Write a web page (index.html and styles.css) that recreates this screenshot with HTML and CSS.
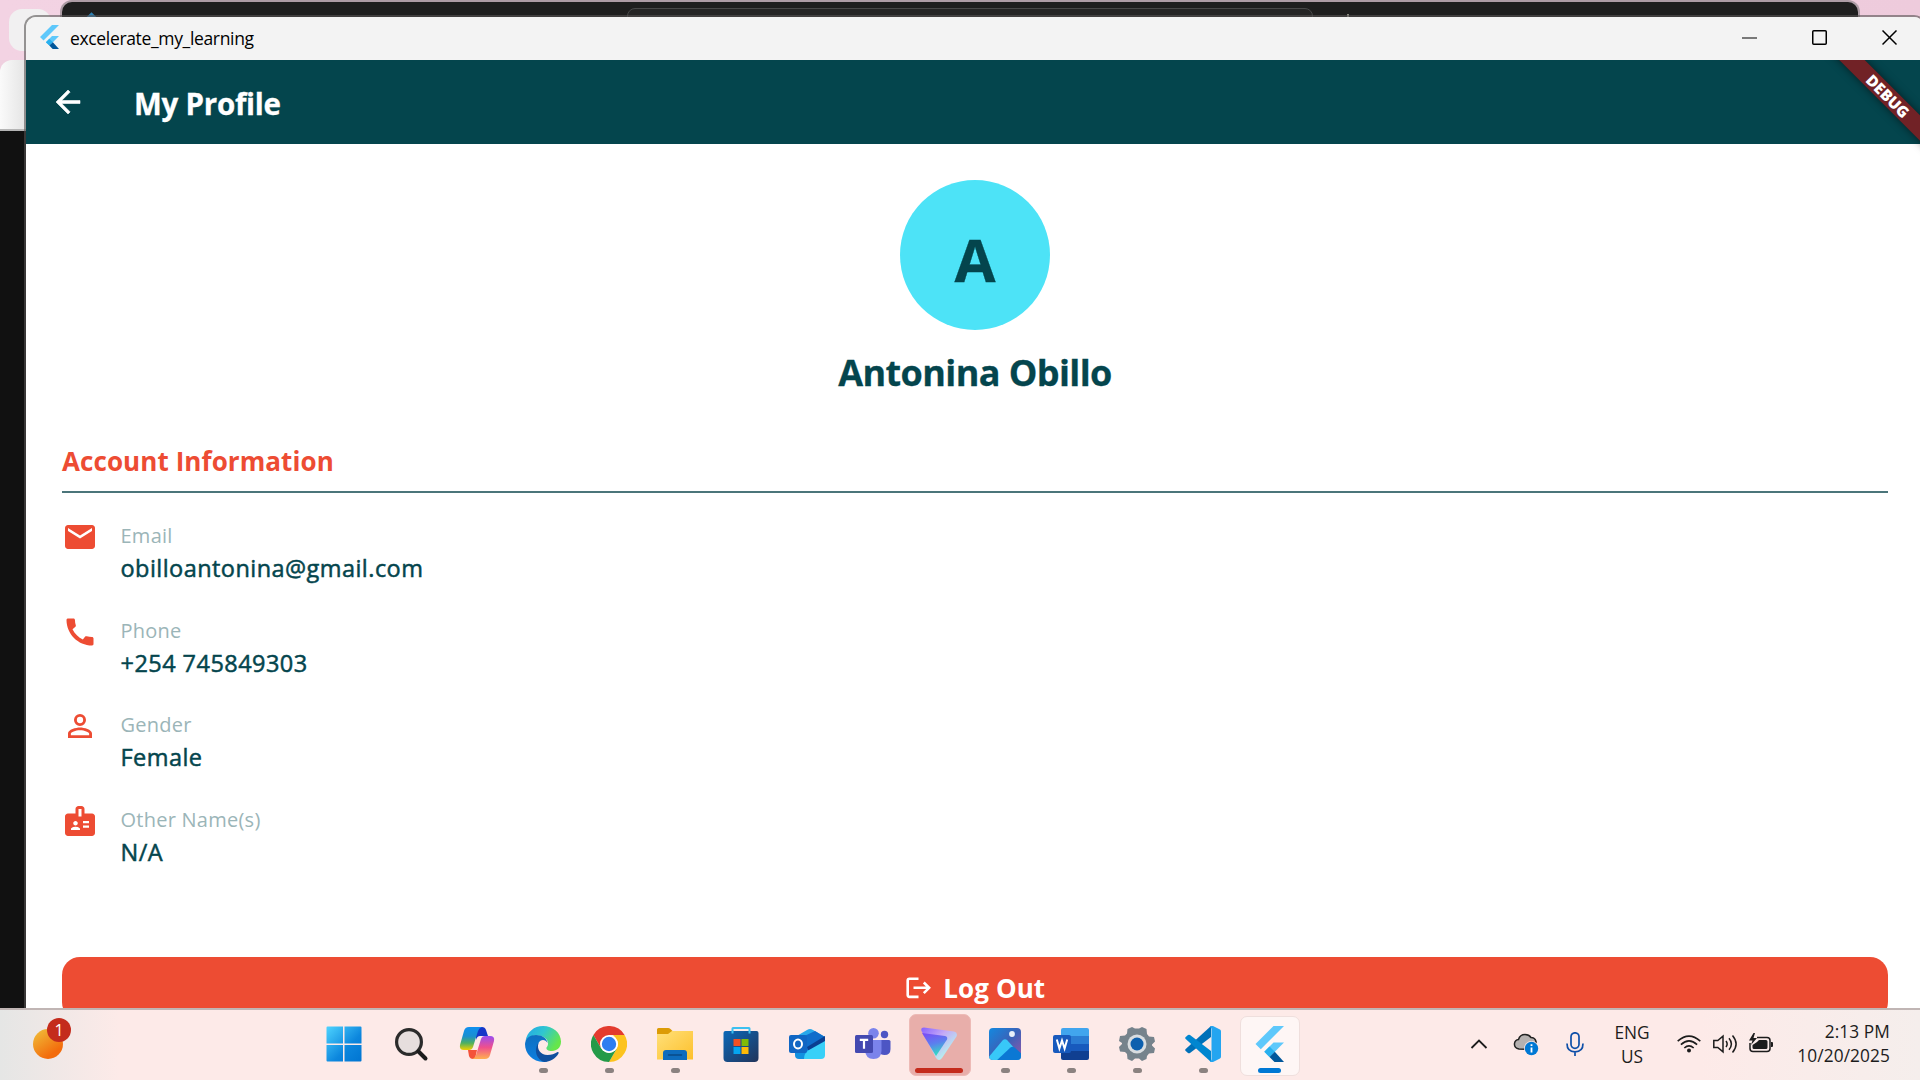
FILE: index.html
```html
<!DOCTYPE html>
<html lang="en">
<head>
<meta charset="utf-8">
<title>excelerate_my_learning</title>
<link rel="stylesheet" href="styles.css">
</head>
<body>
<div class="desktop">
  <div class="browser-window">
    <div class="browser-tabs"><span class="tab-search"></span></div>
    <div class="browser-toolbar"></div>
    <div class="browser-page"></div>
  </div>
  <div class="editor-window">
    <span class="editor-logo"></span>
    <div class="editor-search"></div>
    <span class="editor-spark"></span>
  </div>

  <div class="app-window">
    <div class="titlebar">
      <svg class="app-logo" viewBox="0 0 36 36"><path fill="#5ec8fb" d="M22.500 0H33L9.800 23.200 4.500 18zM22.500 16.500H33L23.800 25.700 18.500 30.900 13.300 25.700z"/><path fill="#29b0ee" d="M13.300 25.700l5.200-5.200 5.300 5.200-5.300 5.200z"/><path fill="#01579b" d="M18.500 30.900l5.300-5.200L33 36H23.500z"/></svg>
      <span class="window-title">excelerate_my_learning</span>
      <div class="window-controls">
        <svg viewBox="0 0 16 16"><path d="M0 8h15" stroke-width="1.200"/></svg>
        <svg viewBox="0 0 16 16"><rect x=".75" y=".75" width="13.500" height="13.500" rx="1"/></svg>
        <svg viewBox="0 0 16 16"><path d="M.5.500l14 14m0-14l-14 14"/></svg>
      </div>
    </div>

    <div class="app-bar">
      <svg class="back" viewBox="0 0 24 24"><path d="M20 11H7.830l5.590-5.590L12 4l-8 8 8 8 1.410-1.410L7.830 13H20z"/></svg>
      <h1>My Profile</h1>
      <div class="debug-clip"><div class="debug-banner">DEBUG</div></div>
    </div>

    <div class="profile">
      <div class="avatar">A</div>
      <h2>Antonina Obillo</h2>
      <h3>Account Information</h3>
      <div class="row">
        <svg viewBox="0 0 24 24"><path d="M20 4H4c-1.100 0-1.990.9-1.990 2L2 18c0 1.100.9 2 2 2h16c1.100 0 2-.9 2-2V6c0-1.100-.9-2-2-2zm0 4l-8 5-8-5V6l8 5 8-5z"/></svg>
        <div class="field"><span class="label">Email</span><span class="value">obilloantonina@gmail.com</span></div>
      </div>
      <div class="row">
        <svg viewBox="0 0 24 24"><path d="M20.010 15.380c-1.230 0-2.420-.2-3.530-.56-.35-.12-.74-.03-1.010.24l-1.570 1.970c-2.830-1.350-5.480-3.900-6.890-6.830l1.950-1.660c.27-.28.35-.67.24-1.020-.37-1.110-.56-2.300-.56-3.530 0-.54-.45-.99-.99-.99H4.190C3.650 3 3 3.240 3 3.990 3 13.280 10.730 21 20.010 21c.71 0 .99-.63.990-1.180v-3.450c0-.54-.45-.99-.99-.99z"/></svg>
        <div class="field"><span class="label">Phone</span><span class="value">+254 745849303</span></div>
      </div>
      <div class="row">
        <svg viewBox="0 0 24 24"><path d="M12 5.900a2.100 2.100 0 110 4.200 2.100 2.100 0 010-4.200m0 9c2.970 0 6.100 1.460 6.100 2.100v1.100H5.900V17c0-.64 3.130-2.100 6.100-2.100M12 4a4 4 0 100 8 4 4 0 000-8zm0 9c-2.670 0-8 1.340-8 4v3h16v-3c0-2.660-5.330-4-8-4z"/></svg>
        <div class="field"><span class="label">Gender</span><span class="value">Female</span></div>
      </div>
      <div class="row">
        <svg viewBox="0 0 24 24"><path fill-rule="evenodd" d="M20 7h-5V4c0-1.100-.9-2-2-2h-2c-1.100 0-2 .9-2 2v3H4c-1.100 0-2 .9-2 2v11c0 1.100.9 2 2 2h16c1.100 0 2-.9 2-2V9c0-1.100-.9-2-2-2zM9 12c.83 0 1.500.67 1.500 1.500S9.830 15 9 15s-1.500-.67-1.500-1.500S8.170 12 9 12zm3 6H6v-.75c0-1 2-1.500 3-1.500s3 .5 3 1.500zm1-9h-2V4h2zm5 7.500h-4V15h4zm0-3h-4V12h4z"/></svg>
        <div class="field"><span class="label">Other Name(s)</span><span class="value">N/A</span></div>
      </div>
      <div class="logout">
        <svg viewBox="0 0 30 30"><path d="M15.500 5.700H6.500Q4.700 5.700 4.700 7.500v14.600Q4.700 23.900 6.500 23.900h9M10.500 14.800h15M20.800 9.500l5.300 5.300-5.300 5.300"/></svg>
        <span>Log Out</span>
      </div>
    </div>
  </div>

  <div class="taskbar">
    <div class="widget"><span class="sun"></span><span class="count">1</span></div>
    <div class="apps">
      <div class="app start"><svg viewBox="0 0 36 36"><defs><linearGradient id="win" x1="0" y1="0" x2="36" y2="36" gradientUnits="userSpaceOnUse"><stop stop-color="#4fd5ff"/><stop offset=".6" stop-color="#0c86dd"/><stop offset="1" stop-color="#0074d1"/></linearGradient></defs><path fill="url(#win)" d="M1.500.500H17v17H.500V1.500q0-1 1-1zM18.500.500H34.500q1 0 1 1v16h-17zM.5 19H17v16.500H1.500q-1 0-1-1zM18.500 19h17v15.500q0 1-1 1h-16z"/></svg></div>
      <div class="app"><svg viewBox="0 0 36 36"><circle cx="16" cy="16" r="12.400" fill="#e6dedd" stroke="#2b2b2b" stroke-width="3.200"/><path d="M25.500 25.500l7 7" stroke="#1c1c1c" stroke-width="4" stroke-linecap="round"/></svg></div>
      <div class="app"><svg viewBox="0 0 36 36"><defs><linearGradient id="cpa" x1="0" y1="0" x2="0" y2="1"><stop stop-color="#1090f0"/><stop offset=".4" stop-color="#1a8fd0"/><stop offset=".7" stop-color="#4fb060"/><stop offset="1" stop-color="#f2d000"/></linearGradient><linearGradient id="cpb" x1="0" y1="0" x2="0" y2="1"><stop stop-color="#9a4df0"/><stop offset=".5" stop-color="#f0508c"/><stop offset="1" stop-color="#ffb050"/></linearGradient></defs><path fill="#1536c8" d="M17 1h6q3 0 4 3l2 6h-8q-3 0-4 4z"/><path fill="#f4523a" d="M9 24h9l-2 9h-2q-3 0-4-3z"/><path fill="url(#cpa)" d="M10 1h13q-3 1-4 4l-5 16q-1 3-4 3H5q-5 0-4-5L5 5q1-4 5-4z"/><path fill="url(#cpb)" d="M26 33H13q3-1 4-4l5-16q1-3 4-3h5q5 0 4 5l-4 14q-1 4-5 4z"/></svg></div>
      <div class="app run"><svg viewBox="0 0 36 36"><defs><linearGradient id="eda" x1="0" y1="0" x2="1" y2=".5"><stop stop-color="#22a5ea"/><stop offset=".5" stop-color="#30c6d0"/><stop offset="1" stop-color="#66e64a"/></linearGradient><linearGradient id="edb" x1="0" y1="0" x2="0" y2="1"><stop stop-color="#0f6fc0"/><stop offset="1" stop-color="#0c7fe0"/></linearGradient></defs><path fill="url(#eda)" d="M.5 15C2 6 9 0 18 0c10 0 18 7 18 15.500 0 6-4 9.500-9 9.500-4 0-6-1.500-5.500-3.500 3-3 1.500-8.500-3-10.500C12 8 4 10 .5 15z"/><path fill="url(#edb)" d="M0 18C.5 12 5 9 11 9c6 0 11 3 11.500 8-2-4-7-4-9 0-3 8 3 14 9 18.500C10 38 0 29 0 18z"/><path fill="#104f9e" d="M13.500 17c-2 6 2 12 9 12 4 0 7-1 10-3 1 0 1.500.5 1 1.500C31 32 25 36 19.500 36 12 34 8 24 13.500 17z"/></svg></div>
      <div class="app run"><svg viewBox="0 0 36 36"><path fill="#e33b2e" d="M2.400 9A18 18 0 0133.600 9H18L10.200 22.500z"/><path fill="#fcc31e" d="M33.600 9A18 18 0 0118 36l7.800-13.500Q29 15 22 9z"/><path fill="#249a48" d="M2.400 9A18 18 0 0018 36l7.800-13.500Q18 31 10.200 22.500z"/><circle cx="18" cy="18" r="9" fill="#fff"/><circle cx="18" cy="18" r="7.200" fill="#2d7df0"/></svg></div>
      <div class="app run"><svg viewBox="0 0 36 36"><defs><linearGradient id="fol" x1="0" y1="0" x2="1" y2="1"><stop stop-color="#ffe07a"/><stop offset="1" stop-color="#fdc02c"/></linearGradient></defs><path fill="#dc9b05" d="M1.500 2H11q1.500 0 2.500 1l2 2H35v5H0V3.500Q0 2 1.500 2z"/><path fill="url(#fol)" d="M0 8h11l4-3h21v28.500H0z"/><path fill="#0e6cbd" d="M6 34v-7q0-3 3-3h18q3 0 3 3v7z"/><path d="M11.500 29h13" stroke="#0a4a87" stroke-width="1.500" stroke-linecap="round"/></svg></div>
      <div class="app"><svg viewBox="0 0 36 36"><defs><linearGradient id="sto" x1="0" y1="0" x2="1" y2="1"><stop stop-color="#0b68b8"/><stop offset="1" stop-color="#22345a"/></linearGradient></defs><path fill="url(#sto)" d="M.5 7Q.5 5 2.500 5h31q2 0 2 2v25q0 4-4 4h-27q-4 0-4-4z"/><path d="M9.500 7.500V2.500q0-.5.500-.5h16q.5 0 .5.500v5" fill="none" stroke="#3cc0f0" stroke-width="2"/><path fill="#f35022" d="M10.500 13h7v7h-7z"/><path fill="#80bb06" d="M18.500 13h7v7h-7z"/><path fill="#05a5f0" d="M10.500 21h7v7h-7z"/><path fill="#ffba08" d="M18.500 21h7v7h-7z"/></svg></div>
      <div class="app"><svg viewBox="0 0 36 36"><path fill="#28a8ea" d="M6 11L18 4q3-2 6 0l12 7v5H6z"/><path fill="#0f6dcb" d="M9 13L26 5l10 6v8L18 27z"/><path fill="#0a3f91" d="M18 21l18-11v6L20 26z"/><path fill="#1090e0" d="M6 24h14v9H10q-4 0-4-4z"/><path fill="#38d0f8" d="M15 33q0-6 5-9l16-9v14q0 4-4 4z"/><rect y="9" width="18" height="18" rx="2" fill="#1066c4"/><ellipse cx="9" cy="18" rx="4" ry="4.500" fill="none" stroke="#fff" stroke-width="2"/></svg></div>
      <div class="app"><svg viewBox="0 0 36 36"><circle cx="29.500" cy="8.500" r="3.700" fill="#4d55c4"/><path fill="#4d55c4" d="M24 14h10q1.500 0 1.500 1.500V23q0 6-6 6-4 0-6-3z"/><circle cx="18.500" cy="7.200" r="5.300" fill="#7b83eb"/><path fill="#7b83eb" d="M11 14h15.500v10.500q0 8.500-8 8.500T10 24z"/><rect y="9" width="18" height="18" rx="1.500" fill="#4449b0"/><path d="M4.800 13.800h8.400M9 13.800v9" stroke="#fff" stroke-width="2.200"/></svg></div>
      <div class="app attention"><svg viewBox="0 0 36 36"><defs><linearGradient id="pra" x1=".2" y1="0" x2=".5" y2="1"><stop stop-color="#7a4df5"/><stop offset=".5" stop-color="#5b80ee"/><stop offset="1" stop-color="#2fe0c0"/></linearGradient><linearGradient id="prb" x1="0" y1="0" x2=".8" y2=".8"><stop stop-color="#8760ff"/><stop offset=".5" stop-color="#c5a9f6"/><stop offset="1" stop-color="#b5f5ee"/></linearGradient></defs><path fill="url(#prb)" d="M3 1.500l30 4q4 1 2.500 5L21 32q-3 4-6 0L.5 5Q-.5 1.500 3 1.500z"/><path fill="url(#pra)" d="M1 7l23 3q3 .5 2 3.500L15 30z"/></svg></div>
      <div class="app run"><svg viewBox="0 0 36 36"><defs><linearGradient id="pha" x1="0" y1="0" x2="1" y2="1"><stop stop-color="#1389e0"/><stop offset=".5" stop-color="#3b62b8"/><stop offset="1" stop-color="#9a55a8"/></linearGradient><clipPath id="phc"><rect x="2" y="2" width="32" height="32" rx="4"/></clipPath></defs><g clip-path="url(#phc)"><path fill="url(#pha)" d="M2 2h32v32H2z"/><circle cx="25" cy="8" r="2.900" fill="#e8f0fa"/><path fill="#38c8f8" d="M1 32L15.500 14.500q2.500-2.500 5 0L36 32v4H1z"/><path fill="#0b78d4" d="M8 36l15.500-14.500q2-1.500 4 0L36 29v7z"/></g></svg></div>
      <div class="app run"><svg viewBox="0 0 36 36"><path fill="#41a5ee" d="M10 2h24q2 0 2 2v6H8V4q0-2 2-2z"/><path fill="#2b7cd3" d="M8 10h28v8H8z"/><path fill="#185abd" d="M8 18h28v7H8z"/><path fill="#103f91" d="M8 25h28v7q0 2-2 2H10q-2 0-2-2z"/><rect y="9" width="18" height="18" rx="2" fill="#185abd"/><path d="M3.800 13.500l2.600 9L9 14.500l2.600 8 2.600-9" fill="none" stroke="#fff" stroke-width="2"/></svg></div>
      <div class="app run"><svg viewBox="0 0 36 36"><path fill="#76838c" d="M13 1l3 1.500h4L23 1l4.500 2 .5 5 2 2.500 5 .5 1 4.500-3 3v1l3 3-1 4.500-5 .5-2 2.500-.5 3L23 35l-3-2.500h-4L13 35l-4.500-2-.5-5-2-2-5-.5L0 21l3-3v-1l-3-2 1-5 5-.5 2-2 .5-4.500z"/><circle cx="18" cy="18" r="9.500" fill="#d9dde0"/><circle cx="18" cy="18" r="6.500" fill="#0c5fae"/></svg></div>
      <div class="app run"><svg viewBox="0 0 36 36"><path fill="#0070b8" d="M26 0v11L5 27q-1 .5-2 0L.7 25q-1-1 0-2z"/><path fill="#0086d0" d="M26 36V25L5 9q-1-.5-2 0L.7 11q-1 1 0 2z"/><path fill="#24a5f0" d="M26 0q1-.3 2 0l7 3.500q1 .5 1 2v25q0 1.500-1 2L28 36q-1 .3-2 0-1.500-.5-.5-1.500 1 0 1-1.500V3q0-1-1-1.500-.5-1 .5-1.500z"/></svg></div>
      <div class="app active"><svg viewBox="0 0 36 36"><path fill="#5ec8fb" d="M22.500 0H33L9.800 23.200 4.500 18zM22.500 16.500H33L23.800 25.700 18.500 30.900 13.300 25.700z"/><path fill="#29b0ee" d="M13.300 25.700l5.200-5.200 5.300 5.200-5.300 5.200z"/><path fill="#01579b" d="M18.500 30.900l5.300-5.200L33 36H23.500z"/></svg></div>
    </div>
    <div class="tray">
      <svg class="chevron" viewBox="0 0 24 24"><path d="M4.500 16L12 8.500l7.500 7.500" fill="none" stroke="#1c1c1c" stroke-width="1.800"/></svg>
      <svg class="cloud" viewBox="0 0 27 27"><path d="M6 18q-5-1-4.500-5.500Q2 9 5.500 8.500 7 3.500 12 3.500q4 0 6 3 4 0 5 4v6l-6 2z" fill="#b5b1b0" stroke="#222" stroke-width="1.500"/><circle cx="18.500" cy="17.500" r="7.500" fill="#fdeae8"/><circle cx="18.500" cy="17.500" r="6.700" fill="#0078d4"/><path d="M18.500 16.500v5M18.500 13.300v1.700" stroke="#fff" stroke-width="1.800"/></svg>
      <svg class="mic" viewBox="0 0 24 24"><rect x="8" y=".8" width="8" height="15.500" rx="4" fill="none" stroke="#0f4fa8" stroke-width="1.700"/><path d="M4 11.500q0 8.300 8 8.300t8-8.300M12 20v4" fill="none" stroke="#0f4fa8" stroke-width="1.700"/></svg>
      <div class="lang"><span>ENG</span><span>US</span></div>
      <svg class="wifi" viewBox="0 0 24 24"><g fill="none" stroke="#1c1c1c" stroke-width="1.600"><path d="M.7 9.200Q12-.8 23.300 9.200M3.900 12.700q8.100-7.600 16.200 0M7.300 16q4.700-4.400 9.400 0"/></g><circle cx="12" cy="18.600" r="2" fill="#1c1c1c"/></svg>
      <svg class="sound" viewBox="0 0 24 24"><g fill="none" stroke="#1c1c1c" stroke-width="1.500"><path d="M.8 8.500h4L10 4.200v15.600l-5.200-4.300h-4zM13 9q2.300 3 0 6M16 6.300q4.800 5.700 0 11.400M19.500 3.500q7.200 8.500 0 17"/></g></svg>
      <svg class="battery" viewBox="0 0 24 24"><path d="M8 5.500h10q3 0 3 3v8q0 3-3 3H4q-3 0-3-3V11" fill="none" stroke="#1c1c1c" stroke-width="1.500"/><path fill="#1c1c1c" d="M10 8h7q1.500 0 1.500 1.500v6q0 1.500-1.500 1.500H5q-1.500 0-1.500-1.500V13L8 10zM22 10h1q1 0 1 1v3q0 1-1 1h-1zM4.500 1L0 8.500h3.500L2 13l6-7H4.500L6 1z"/></svg>
      <div class="clock"><span>2:13 PM</span><span>10/20/2025</span></div>
    </div>
  </div>
</div>
</body>
</html>
```
FILE: styles.css
```css
* { box-sizing: border-box; }
body { margin: 0; font-family: "Open Sans", "Noto Sans", sans-serif; }
svg { display: block; flex: none; }
h1, h2, h3 { margin: 0; }

.desktop { position: relative; width: 1920px; height: 1080px; overflow: hidden; background: #eccbdc; }

/* windows behind the app */
.browser-window { position: absolute; inset: 0; display: flex; flex-direction: column; }
.browser-tabs { height: 60px; padding: 9px; background: linear-gradient(90deg, #f3d3e3, #eecbdc); box-shadow: 0 12px #efcfdf; }
.tab-search { display: block; width: 42px; height: 42px; border-radius: 13px; background: #f1f0f1; }
.browser-toolbar { position: relative; height: 71px; width: 60px; border-radius: 12px 0 0; background: linear-gradient(90deg, #fafafa, #e4e4e4 26px); border-bottom: 2px solid #b5b5b5; }
.browser-page { flex: 1; background: #111; }

.editor-window { position: absolute; left: 62px; top: 2px; width: 1796px; height: 100px; background: #1e1e1e; border-radius: 10px; box-shadow: 0 0 0 2px #ad9ca5; display: flex; padding: 6px 0 0 565px; }
.editor-search { width: 686px; height: 34px; border: 1px solid #484848; border-radius: 8px; background: #252525; }
.editor-logo { position: absolute; left: 25px; top: 12px; width: 9px; height: 9px; background: #2b80b4; transform: rotate(45deg); }
.editor-spark { position: absolute; left: 1285px; top: 12px; width: 2px; height: 6px; background: #8a8a80; }

.app-window { position: absolute; left: 24px; top: 15px; width: 1902px; height: 1100px; border: 2px solid rgba(86, 84, 84, .6); border-radius: 12px 12px 0 0; background: #fff; background-clip: padding-box; overflow: hidden; display: flex; flex-direction: column; }
.titlebar { height: 43px; background: #f3f3f3; display: flex; align-items: center; padding-left: 11px; }
.app-logo { width: 24px; height: 24px; margin-top: -3px; }
.window-title { margin-left: 9px; font-size: 17.5px; line-height: 24px; letter-spacing: -.34px; color: #000; margin-top: -1px; }
.window-controls { margin-left: auto; display: flex; gap: 54px; padding-right: 26px; margin-top: -2px; }
.window-controls svg { width: 16px; height: 16px; fill: none; stroke: #000; stroke-width: 1.5; }

.app-bar { position: relative; height: 84px; background: #04454d; color: #fff; display: flex; align-items: center; padding-left: 24px; }
.back { width: 36px; height: 36px; fill: #fff; stroke: #fff; stroke-width: .4; }
.app-bar h1 { margin-left: 48px; font-size: 29.5px; line-height: 40px; font-weight: 700; letter-spacing: -.25px; margin-top: 4px; -webkit-text-stroke: .3px #fff; }
.debug-clip { position: absolute; right: 4px; top: 0; width: 110px; height: 110px; clip-path: inset(0); }
.debug-banner { position: absolute; left: -22px; top: 27px; width: 200px; height: 18px; line-height: 18px; background: #712226; transform: rotate(45deg); text-align: center; font-size: 15.5px; font-weight: 800; box-shadow: 0 0 9px rgba(0, 0, 0, .55); }

.profile { padding: 36px; display: flex; flex-direction: column; color: #04454d; }
.avatar { align-self: center; width: 150px; height: 150px; border-radius: 50%; background: #4de3f7; display: flex; align-items: center; justify-content: center; font-size: 59.5px; line-height: 80px; font-weight: 700; padding-top: 8px; -webkit-text-stroke: .3px #04454d; }
.profile h2 { text-align: center; font-size: 36px; line-height: 48px; letter-spacing: -.6px; margin-top: 19px; -webkit-text-stroke: .3px #04454d; }
.profile h3 { margin-top: 46px; color: #ed4c33; font-size: 26px; line-height: 36px; letter-spacing: .08px; border-bottom: 2px solid #4b757a; height: 50px; margin-bottom: 24px; }
.row { display: flex; gap: 22.5px; height: 94.5px; }
.row svg { width: 36px; height: 36px; fill: #ed4c33; margin-top: 2px; }
.field { display: flex; flex-direction: column; padding-top: 3px; }
.label { font-size: 20px; line-height: 32px; letter-spacing: .25px; color: #9bb5b8; }
.value { font-size: 23.5px; line-height: 32px; letter-spacing: .45px; -webkit-text-stroke: .5px #04454d; }
.logout { margin-top: 61.5px; height: 63px; border-radius: 18px; background: #ed4c33; color: #fff; display: flex; align-items: center; justify-content: center; gap: 10.5px; font-size: 26px; font-weight: 700; letter-spacing: .1px; padding-right: 2px; }
.logout svg { width: 30px; height: 30px; fill: none; stroke: #fff; stroke-width: 2.6; }

.taskbar { position: absolute; left: 0; right: 0; bottom: 0; height: 72px; border-top: 2px solid #c0b5b4; background: linear-gradient(90deg, #e5e6e5, #fdeae8 120px, #fdeae8 1700px, #f5eeec); display: flex; color: #1c1c1c; }
.widget { position: relative; width: 312px; padding: 19px 0 0 33px; }
.sun { display: block; width: 30px; height: 30px; border-radius: 50%; background: linear-gradient(145deg, #f0c33c, #f36c0c 75%); }
.count { position: absolute; left: 47px; top: 8px; width: 24px; height: 24px; border-radius: 50%; background: #c42b1c; color: #fff; font-size: 16px; line-height: 24px; text-align: center; }
.apps { display: flex; }
.app { position: relative; width: 66px; height: 70px; padding: 16px 15px 0; }
.app svg { position: relative; width: 36px; height: 36px; }
.start { left: -1.5px; }
.run::after { content: ""; position: absolute; left: 28.5px; top: 58px; width: 9px; height: 5px; border-radius: 3px; background: #8b8280; }
.attention::before, .active::before { content: ""; position: absolute; left: 3px; top: 4px; width: 60px; height: 60px; border-radius: 7px; background: #e8aeaa; border: 1px solid #edbab6; }
.attention::after { content: ""; position: absolute; left: 9px; top: 58px; width: 48px; height: 5px; border-radius: 3px; background: #c42b1c; }
.active::before { left: 4px; top: 6px; width: 58px; height: 58px; background: #fef6f5; border: 1px solid #efdfdd; }
.active::after { content: ""; position: absolute; left: 22px; top: 58px; width: 23px; height: 5px; border-radius: 3px; background: #0078d4; }
.tray { margin-left: auto; display: flex; align-items: center; padding: 0 30px 2px 0; }
.tray svg { width: 24px; height: 24px; }
.tray .cloud { width: 27px; height: 27px; margin-left: 22px; }
.tray .mic { margin-left: 23px; }
.lang, .clock { display: flex; flex-direction: column; font-size: 17.3px; line-height: 24px; }
.lang { align-items: center; width: 36px; margin: 1px 27px 0; }
.tray .sound, .tray .battery { margin-left: 12px; }
.clock { align-items: flex-end; width: 117px; letter-spacing: .1px; }
```
